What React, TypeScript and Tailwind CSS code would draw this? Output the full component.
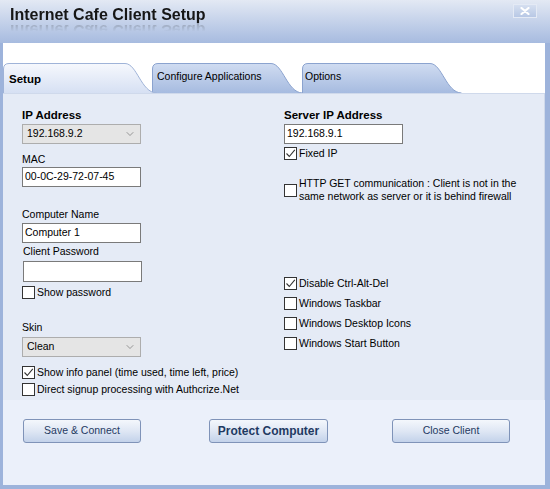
import React from 'react';
import { ChevronDown } from 'lucide-react';

function Check({ checked = false }: { checked?: boolean }) {
  return (
    <span className="w-[13px] h-[13px] border border-[#333] bg-white flex items-center justify-center shrink-0">
      {checked && (
        <svg width="11" height="11" viewBox="0 0 11 11">
          <path d="M1.5 5.5 L4.3 8.5 L9.8 1.8" stroke="#333" strokeWidth="1.1" fill="none" />
        </svg>
      )}
    </span>
  );
}

function CheckRow({ label, checked, className = '' }: { label: React.ReactNode; checked?: boolean; className?: string }) {
  return (
    <div className={`flex items-center gap-[2px] ${className}`}>
      <Check checked={checked} />
      <span className="leading-[13px]">{label}</span>
    </div>
  );
}

function Combo({ value, className = '' }: { value: string; className?: string }) {
  return (
    <div className={`w-[119px] h-[20px] bg-[#e5e5e5] border border-[#adadad] flex items-center justify-between pl-[4px] pr-[4px] ${className}`}>
      <span>{value}</span>
      <ChevronDown size={12} strokeWidth={1.2} className="text-[#606060]" />
    </div>
  );
}

function Field({ value = '', className = '' }: { value?: string; className?: string }) {
  return (
    <div className={`w-[119px] h-[20px] bg-white border border-[#7a7a7a] flex items-center pl-[2px] ${className}`}>
      {value}
    </div>
  );
}

function Tab({ label, active, className = '', w }: { label: string; active?: boolean; className?: string; w: number }) {
  const d = `M0.5 30 L0.5 6 Q0.5 0.5 6 0.5 L${w - 32} 0.5 C${w - 20} 0.5 ${w - 16} 29.5 ${w - 0.5} 30`;
  const id = `g-${label.replace(/\s/g, '')}`;
  return (
    <div className={`relative h-[30px] shrink-0 ${className}`}>
      <svg className="absolute inset-0" width={w} height={30}>
        <defs>
          <linearGradient id={id} x1="0" y1="0" x2="0" y2="1">
            {active ? (
              <>
                <stop offset="0" stopColor="#f6f8fd" />
                <stop offset="1" stopColor="#d6e0f3" />
              </>
            ) : (
              <>
                <stop offset="0" stopColor="#d0dcf1" />
                <stop offset="1" stopColor="#a6bbe0" />
              </>
            )}
          </linearGradient>
        </defs>
        <path d={d} fill={`url(#${id})`} stroke={active ? '#9fb3d8' : '#8ba3cf'} strokeWidth="1" />
      </svg>
      <span
        className={`relative block ${
          active ? 'pt-[9px] pl-[6px] font-bold text-[11.5px] leading-[14px]' : 'pt-[7px] text-[10.5px] leading-[13px]'
        }`}
      >
        {label}
      </span>
    </div>
  );
}

function WinButton({ children, bold, className = '' }: { children: React.ReactNode; bold?: boolean; className?: string }) {
  return (
    <button
      className={`h-[24px] rounded-[3px] border border-[#7f93b8] bg-linear-to-b from-[#f4f7fc] via-[#dfe7f4] to-[#c3d2ea] text-[#1f3a62] ${
        bold ? 'font-bold text-[12px]' : 'text-[10.5px]'
      } ${className}`}
    >
      {children}
    </button>
  );
}

export default function App() {
  return (
    <div className="w-[550px] h-[489px] bg-[#9db3db] flex flex-col font-['Liberation_Sans',Arial,sans-serif] text-[10.5px] text-black overflow-hidden">
      {/* title bar */}
      <div className="h-[43px] shrink-0 bg-linear-to-b from-[#e3e9f4] to-[#a7bbdf] flex justify-between items-start">
        <div className="pl-[10px] pt-[5px]">
          <div className="font-bold text-[16px] leading-[19px] text-[#161616] [-webkit-box-reflect:below_-3px_linear-gradient(transparent_45%,rgba(0,0,0,0.3))]">
            Internet Cafe Client Setup
          </div>
        </div>
        <div className="mt-[4px] mr-[13px] w-[24px] h-[14px] border border-[#e4eaf5] bg-linear-to-b from-[#d5dff0] to-[#b8c8e5] flex items-center justify-center">
          <svg width="10" height="8" viewBox="0 0 10 8">
            <path d="M1.5 1 L8.5 7 M8.5 1 L1.5 7" stroke="#ffffff" strokeWidth="2.2" strokeLinecap="round" />
          </svg>
        </div>
      </div>

      {/* body */}
      <div className="flex-1 ml-[3px] mr-[5px] mb-[4px] flex flex-col bg-[#ebf0fa]">
        {/* tab strip */}
        <div className="bg-white pt-[20px] flex items-end">
          <Tab label="Setup" active w={154} className="w-[154px] z-10" />
          <Tab label="Configure Applications" w={151} className="w-[151px] -ml-[5px] pl-[5px]" />
          <Tab label="Options" w={160} className="w-[160px] -ml-[1px] pl-[3px]" />
        </div>

        {/* panel */}
        <div className="border-t border-r border-[#cfd9eb] bg-[#e5ebf6] grid grid-cols-[262px_1fr] pl-[19px] pt-[14px] pb-[4px]">
          <div className="flex flex-col items-start">
            <div className="font-bold text-[11.5px] leading-[14px]">IP Address</div>
            <Combo value="192.168.9.2" className="mt-[2px]" />
            <div className="mt-[9px] leading-[13px]">MAC</div>
            <Field value="00-0C-29-72-07-45" className="mt-[1px]" />
            <div className="mt-[21px] leading-[13px]">Computer Name</div>
            <Field value="Computer 1" className="mt-[2px]" />
            <div className="mt-[2px] ml-[1px] leading-[13px]">Client Password</div>
            <Field className="mt-[3px] ml-[1px] h-[21px]" />
            <CheckRow label="Show password" className="mt-[4px]" />
            <div className="mt-[22px] leading-[13px]">Skin</div>
            <Combo value="Clean" className="mt-[3px]" />
            <CheckRow label="Show info panel (time used, time left, price)" checked className="mt-[9px]" />
            <CheckRow label="Direct signup processing with Authcrize.Net" className="mt-[4px]" />
          </div>

          <div className="flex flex-col items-start">
            <div className="font-bold text-[11.5px] leading-[14px]">Server IP Address</div>
            <Field value="192.168.9.1" className="mt-[2px]" />
            <CheckRow label="Fixed IP" checked className="mt-[3px]" />
            <CheckRow
              label={
                <>
                  HTTP GET communication : Client is not in the
                  <br />
                  same network as server or it is behind firewall
                </>
              }
              className="mt-[17px]"
            />
            <CheckRow label="Disable Ctrl-Alt-Del" checked className="mt-[74px]" />
            <CheckRow label="Windows Taskbar" className="mt-[7px]" />
            <CheckRow label="Windows Desktop Icons" className="mt-[7px]" />
            <CheckRow label="Windows Start Button" className="mt-[7px]" />
          </div>
        </div>

        {/* buttons */}
        <div className="flex pt-[19px]">
          <WinButton className="ml-[20px] w-[118px]">Save &amp; Connect</WinButton>
          <WinButton bold className="ml-[68px] w-[119px]">Protect Computer</WinButton>
          <WinButton className="ml-[64px] w-[118px]">Close Client</WinButton>
        </div>
      </div>
    </div>
  );
}
